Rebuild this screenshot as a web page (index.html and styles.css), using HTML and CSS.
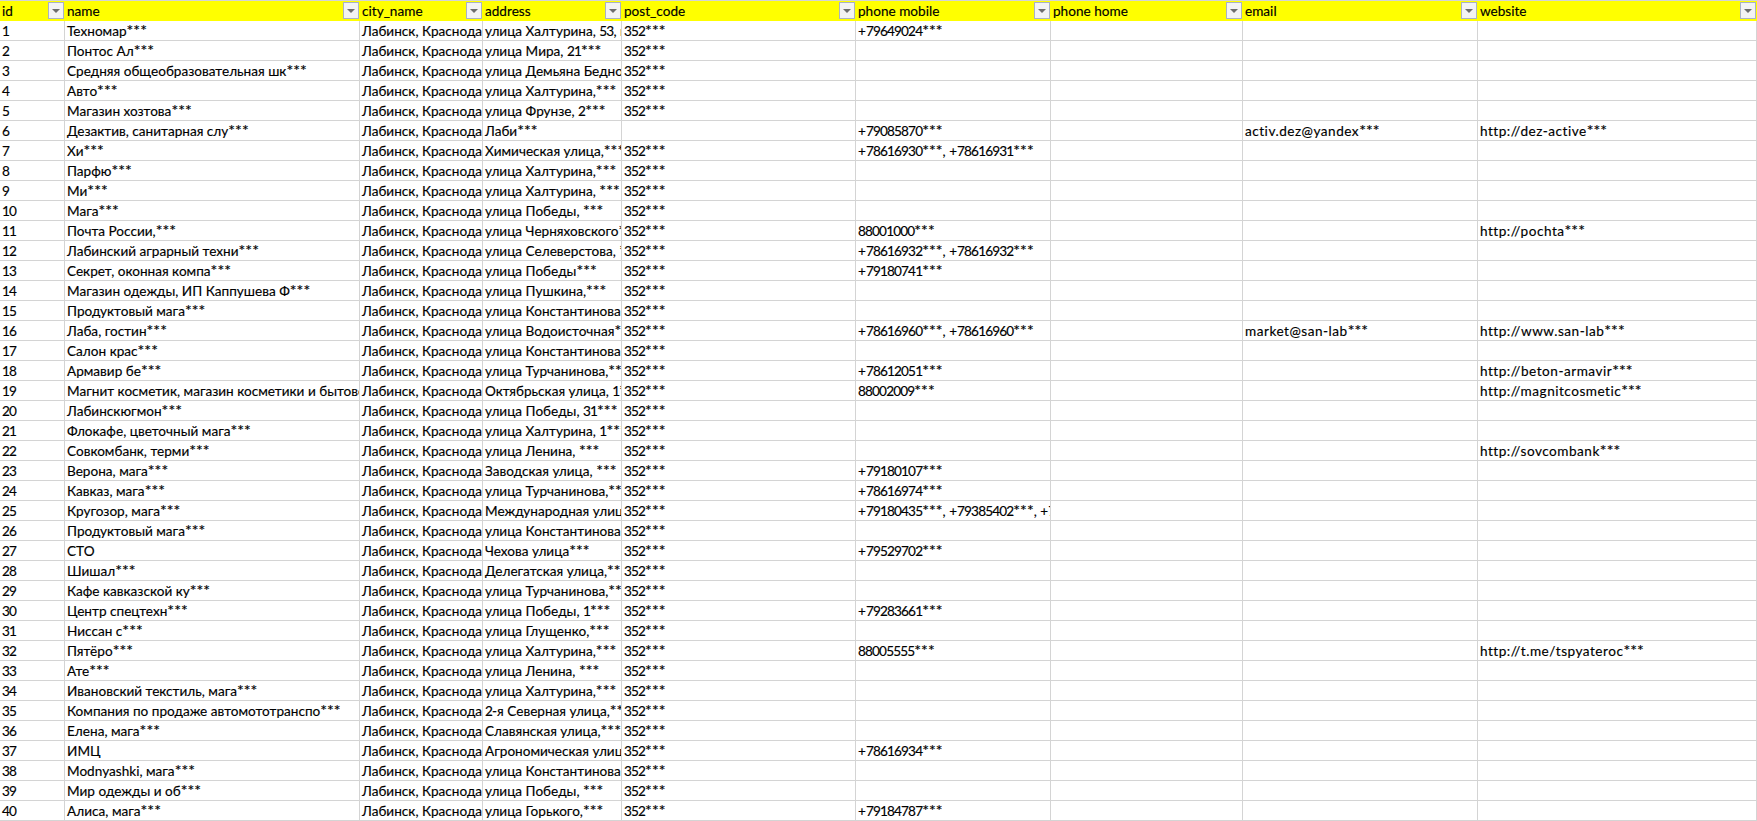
FILE: index.html
```html
<!DOCTYPE html>
<html lang="ru">
<head>
<meta charset="utf-8">
<title>Таблица</title>
<link rel="stylesheet" href="styles.css">
</head>
<body>
<div id="root"></div>
<script src="app.js"></script>
</body>
</html>
```
FILE: styles.css
```css
html, body { margin: 0; padding: 0; background: #fff; overflow: hidden; }
.sheet {
  border-collapse: separate;
  border-spacing: 0;
  table-layout: fixed;
  width: 1757px;
  font-family: "Lato", "Open Sans", sans-serif;
  font-size: 13.6px;
  color: #000;
  border-top: 1px solid #d4d4d4;
  -webkit-text-stroke: 0.15px #000;
}
.sheet th, .sheet td {
  height: 20px;
  box-sizing: border-box;
  padding: 0 0 0 2px;
  overflow: hidden;
  white-space: nowrap;
  font-weight: 400;
  text-align: left;
  vertical-align: middle;
}
.sheet td { border-right: 1px solid #d4d4d4; border-bottom: 1px solid #d4d4d4; }
.sheet th { background: #ffff00; position: relative; }
.sheet td.latin { letter-spacing: 0.5px; }
.mask { font-size: 16px; line-height: 0; letter-spacing: 0; }
.num { letter-spacing: -0.85px; }
.filter {
  position: absolute;
  right: 1px;
  top: 1px;
  width: 16px;
  height: 17px;
  box-sizing: border-box;
  background: #f3f3f3;
  border: 1px solid #a9b2c4;
}
.filter::after {
  content: "";
  position: absolute;
  left: 3px;
  top: 6px;
  border-left: 4px solid transparent;
  border-right: 4px solid transparent;
  border-top: 4px solid #6d6d6d;
}
```
FILE: app.js
```js
var widths=[65,295,123,139,234,195,192,235,279];
var heads=["id","name","city_name","address","post_code","phone mobile","phone home","email","website"];
var C="Лабинск, Краснодарский край***",P="352***";
var rows=[
["Техномар***","улица Халтурина, 53, корпус***",P,"+79649024***"],
["Понтос Ал***","улица Мира, 21***",P],
["Средняя общеобразовательная шк***","улица Демьяна Бедного***",P],
["Авто***","улица Халтурина,***",P],
["Магазин хозтова***","улица Фрунзе, 2***",P],
["Дезактив, санитарная слу***","Лаби***","","+79085870***","","activ.dez@yandex***","http://dez-active***"],
["Хи***","Химическая улица,***",P,"+78616930***, +78616931***"],
["Парфю***","улица Халтурина,***",P],
["Ми***","улица Халтурина, ***",P],
["Мага***","улица Победы, ***",P],
["Почта России,***","улица Черняховского***",P,"88001000***","","","http://pochta***"],
["Лабинский аграрный техни***","улица Селеверстова, ***",P,"+78616932***, +78616932***"],
["Секрет, оконная компа***","улица Победы***",P,"+79180741***"],
["Магазин одежды, ИП Каппушева Ф***","улица Пушкина,***",P],
["Продуктовый мага***","улица Константинова***",P],
["Лаба, гостин***","улица Водоисточная***",P,"+78616960***, +78616960***","","market@san-lab***","http://www.san-lab***"],
["Салон крас***","улица Константинова***",P],
["Армавир бе***","улица Турчанинова,***",P,"+78612051***","","","http://beton-armavir***"],
["Магнит косметик, магазин косметики и бытовой химии***","Октябрьская улица, 1***",P,"88002009***","","","http://magnitcosmetic***"],
["Лабинскюгмон***","улица Победы, 31***",P],
["Флокафе, цветочный мага***","улица Халтурина, 1***",P],
["Совкомбанк, терми***","улица Ленина, ***",P,"","","","http://sovcombank***"],
["Верона, мага***","Заводская улица, ***",P,"+79180107***"],
["Кавказ, мага***","улица Турчанинова,***",P,"+78616974***"],
["Кругозор, мага***","Международная улица***",P,"+79180435***, +79385402***, +79180000***"],
["Продуктовый мага***","улица Константинова***",P],
["СТО","Чехова улица***",P,"+79529702***"],
["Шишал***","Делегатская улица,***",P],
["Кафе кавказской ку***","улица Турчанинова,***",P],
["Центр спецтехн***","улица Победы, 1***",P,"+79283661***"],
["Ниссан с***","улица Глущенко,***",P],
["Пятёро***","улица Халтурина,***",P,"88005555***","","","http://t.me/tspyateroc***"],
["Ате***","улица Ленина, ***",P],
["Ивановский текстиль, мага***","улица Халтурина,***",P],
["Компания по продаже автомототранспо***","2-я Северная улица,***",P],
["Елена, мага***","Славянская улица,***",P],
["ИМЦ","Агрономическая улица***",P,"+78616934***"],
["Modnyashki, мага***","улица Константинова***",P],
["Мир одежды и об***","улица Победы, ***",P],
["Алиса, мага***","улица Горького,***",P,"+79184787***"]
];
function fill(cell,text){
 text.split(/(\*+|\d+)/).forEach(function(part){
  if(!part)return;
  if(part[0]==="*"||/^\d/.test(part)){
   var s=document.createElement("span");
   s.className=part[0]==="*"?"mask":"num";
   s.textContent=part;
   cell.appendChild(s);
  } else cell.appendChild(document.createTextNode(part));
 });
}
var t=document.createElement("table");t.className="sheet";
var cg=document.createElement("colgroup");
widths.forEach(function(w){var c=document.createElement("col");c.style.width=w+"px";cg.appendChild(c);});
t.appendChild(cg);
var th=document.createElement("thead"),hr=document.createElement("tr");
heads.forEach(function(h){var c=document.createElement("th");c.textContent=h;var b=document.createElement("span");b.className="filter";c.appendChild(b);hr.appendChild(c);});
th.appendChild(hr);t.appendChild(th);
var tb=document.createElement("tbody");
rows.forEach(function(r,i){
 var tr=document.createElement("tr");
 var vals=[String(i+1),r[0],C,r[1],r[2],r[3]||"",r[4]||"",r[5]||"",r[6]||""];
 vals.forEach(function(v,j){var c=document.createElement("td");if(j>=7)c.className="latin";fill(c,v);tr.appendChild(c);});
 tb.appendChild(tr);
});
t.appendChild(tb);
document.getElementById("root").appendChild(t);
```
